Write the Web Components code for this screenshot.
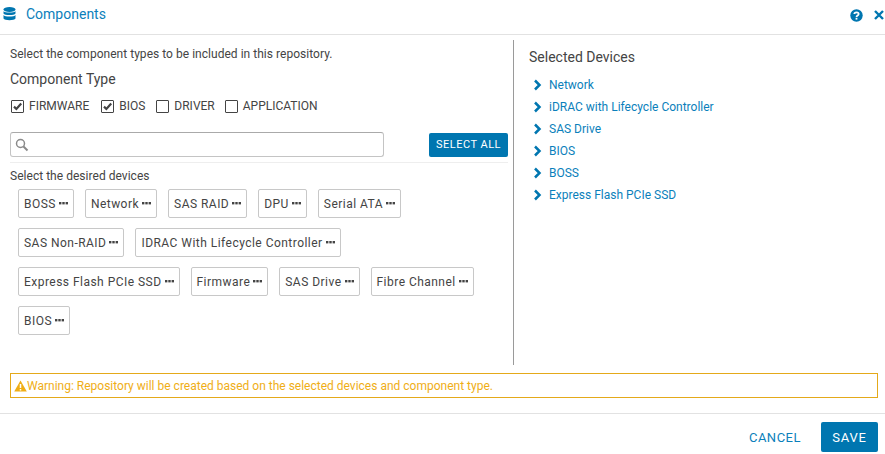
<!DOCTYPE html>
<html>
<head>
<meta charset="utf-8">
<title>Components</title>
<style>
  html, body { margin: 0; padding: 0; background: #fff; }
  body { font-family: Roboto, "Liberation Sans", sans-serif; color: #444; }
</style>
</head>
<body>
<components-dialog></components-dialog>

<script>
class CheckOption extends HTMLElement {
    connectedCallback() {
        const checked = this.hasAttribute('checked');
        this.attachShadow({ mode: 'open' }).innerHTML = `
            <style>
                :host { display: inline-flex; align-items: center; gap: 5px; font-size: 12px; color: #444; height: 14px; }
                .box { width: 11px; height: 11px; border: 1px solid #444; border-radius: 1px; display: block; }
                svg { display: block; }
            </style>
            <span class="box">${checked ? '<svg width="11" height="11" viewBox="0 0 11 11"><path d="M2 5.6 4.4 8 9.2 2.6" fill="none" stroke="#444" stroke-width="2.2"/></svg>' : ''}</span>
            <span><slot></slot></span>
        `;
    }
}

class DeviceTag extends HTMLElement {
    connectedCallback() {
        this.attachShadow({ mode: 'open' }).innerHTML = `
            <style>
                :host { display: inline-flex; align-items: center; gap: 3px; box-sizing: border-box; height: 29px; padding: 0 5px; border: 1px solid #c8c8c8; border-radius: 2px; font-size: 12px; letter-spacing: .47px; color: #444; background: #fff; white-space: nowrap; }
                svg { display: block; margin-top: -1px; }
            </style>
            <span><slot></slot></span>
            <svg width="9" height="4" viewBox="0 0 9 4" fill="#444"><rect x="0" y="1" width="2.400" height="2.400"/><rect x="3.300" y="1" width="2.400" height="2.400"/><rect x="6.600" y="1" width="2.400" height="2.400"/></svg>
        `;
    }
}

class DeviceLink extends HTMLElement {
    connectedCallback() {
        this.attachShadow({ mode: 'open' }).innerHTML = `
            <style>
                :host { display: flex; align-items: center; gap: 7px; height: 22px; font-size: 12px; color: #0b7fbb; }
                svg { display: block; }
            </style>
            <svg width="13" height="12" viewBox="0 0 13 12"><path d="M6 1.500 10.500 6 6 10.500" fill="none" stroke="#0076b0" stroke-width="2.500"/></svg>
            <span><slot></slot></span>
        `;
    }
}

class ComponentsDialog extends HTMLElement {
    connectedCallback() {
        const tagRows = [
            ['BOSS', 'Network', 'SAS RAID', 'DPU', 'Serial ATA'],
            ['SAS Non-RAID', 'IDRAC With Lifecycle Controller'],
            ['Express Flash PCIe SSD', 'Firmware', 'SAS Drive', 'Fibre Channel'],
            ['BIOS']
        ];
        const selected = ['Network', 'iDRAC with Lifecycle Controller', 'SAS Drive', 'BIOS', 'BOSS', 'Express Flash PCIe SSD'];

        this.attachShadow({ mode: 'open' }).innerHTML = `
            <style>
                :host { display: flex; flex-direction: column; width: 885px; height: 454px; box-sizing: border-box; overflow: hidden; background: #fff; font-family: Roboto, "Liberation Sans", sans-serif; color: #444; }
                header { display: flex; align-items: center; box-sizing: border-box; padding: 0 1px 6px 3px; border-bottom: 1px solid #e2e2e2; flex: none; height: 35px; }
                header h1 { margin: 0 0 0 10px; font-size: 14px; font-weight: 400; color: #0b7fbb; flex: 1; }
                .actions { display: flex; align-items: center; gap: 11px; margin-top: 2px; }
                svg { display: block; }
                main { display: flex; height: 325px; margin-top: 5px; flex: none; }
                .left { width: 514px; box-sizing: border-box; border-right: 1px solid #9a9a9a; padding: 7px 5px 0 10px; flex: none; }
                .hint { font-size: 12px; letter-spacing: .03px; line-height: 14px; }
                h2 { margin: 0; font-size: 14px; font-weight: 400; line-height: 16px; color: #444; }
                .left h2 { margin-top: 10px; }
                .types { display: flex; gap: 11px; margin: 12px 0 0 1px; height: 14px; align-items: center; }
                .types check-option:first-child { margin-right: 1px; }
                .types check-option:nth-child(3) { margin-right: -1px; }
                .search-row { display: flex; justify-content: space-between; align-items: center; margin-top: 19px; height: 25px; }
                .search { width: 374px; height: 25px; box-sizing: border-box; border: 1px solid #c4c4c4; border-top-color: #aaa; border-radius: 3px; display: flex; align-items: center; padding-left: 4px; }
                .btn { display: flex; align-items: center; justify-content: center; background: #0076b0; color: #fff; border-radius: 2px; }
                .select-all { width: 79px; height: 24px; font-size: 11px; letter-spacing: .5px; }
                .rule { border-top: 1px solid #eee; margin-top: 5px; }
                .left .hint { display: block; }
                .desired { margin-top: 6px; }
                .tags { margin: 6px 0 0 8px; display: flex; flex-direction: column; gap: 10px; }
                .tag-row { display: flex; gap: 11px; }
                .right { padding: 9px 0 0 15px; flex: 1; }
                .right h2 { margin-bottom: 9px; }
                .warning { margin: 8px 7px 0 10px; height: 25px; box-sizing: border-box; border: 1px solid #e4a91a; display: flex; align-items: center; padding-left: 3px; font-size: 12px; color: #efae16; flex: none; }
                footer { margin-top: 15px; border-top: 1px solid #e2e2e2; display: flex; justify-content: flex-end; align-items: center; gap: 20px; padding: 8px 7px 0 0; }
                .cancel { font-size: 13px; letter-spacing: .5px; color: #0b7fbb; }
                .save { width: 57px; height: 30px; font-size: 13px; letter-spacing: .75px; }
            </style>
            <header>
                <svg width="13" height="14" viewBox="0 0 13 14" fill="#0076b0"><ellipse cx="6.500" cy="2.500" rx="6" ry="2.400"/><path d="M.5 4.200C1.500 6 11.500 6 12.500 4.200V6.500C11.500 8.500 1.500 8.500 .5 6.500zM.5 8C1.500 10 11.500 10 12.500 8V11.500C11.500 13.800 1.500 13.800 .5 11.500z"/></svg>
                <h1>Components</h1>
                <div class="actions">
                    <svg width="13" height="13" viewBox="0 0 13 13"><circle cx="6.500" cy="6.500" r="6.200" fill="#0076b0"/><path d="M4.300 5.100C4.300 2.800 8.700 2.800 8.700 5.100 8.700 6.600 6.500 6.500 6.500 8" fill="none" stroke="#fff" stroke-width="1.700"/><rect x="5.600" y="8.800" width="1.800" height="1.800" fill="#fff"/></svg>
                    <svg width="10" height="10" viewBox="0 0 10 10"><path d="M1 1 9 9M9 1 1 9" stroke="#0076b0" stroke-width="2.400"/></svg>
                </div>
            </header>
            <main>
                <section class="left">
                    <span class="hint">Select the component types to be included in this repository.</span>
                    <h2>Component Type</h2>
                    <div class="types">
                        <check-option checked>FIRMWARE</check-option>
                        <check-option checked>BIOS</check-option>
                        <check-option>DRIVER</check-option>
                        <check-option>APPLICATION</check-option>
                    </div>
                    <div class="search-row">
                        <div class="search">
                            <svg width="14" height="14" viewBox="0 0 14 14" fill="none" stroke="#8a8a8a"><circle cx="5.500" cy="5.500" r="4" stroke-width="1.500"/><path d="M8.500 8.500 12.500 12.500" stroke-width="2"/></svg>
                        </div>
                        <div class="btn select-all">SELECT ALL</div>
                    </div>
                    <div class="rule"></div>
                    <span class="hint desired">Select the desired devices</span>
                    <div class="tags">
                        ${tagRows.map(row => `<div class="tag-row">${row.map(t => `<device-tag>${t}</device-tag>`).join('')}</div>`).join('')}
                    </div>
                </section>
                <section class="right">
                    <h2>Selected Devices</h2>
                    ${selected.map(s => `<device-link>${s}</device-link>`).join('')}
                </section>
            </main>
            <div class="warning">
                <svg width="13" height="12" viewBox="0 0 13 12"><path d="M6.500 .5 12.800 11.500H.2z" fill="#efae16"/><path d="M6.500 4V8M6.500 9V10.500" stroke="#fff" stroke-width="1.500"/></svg>
                <span>Warning: Repository will be created based on the selected devices and component type.</span>
            </div>
            <footer>
                <span class="cancel">CANCEL</span>
                <div class="btn save">SAVE</div>
            </footer>
        `;
    }
}

customElements.define('check-option', CheckOption);
customElements.define('device-tag', DeviceTag);
customElements.define('device-link', DeviceLink);
customElements.define('components-dialog', ComponentsDialog);
</script>
</body>
</html>
